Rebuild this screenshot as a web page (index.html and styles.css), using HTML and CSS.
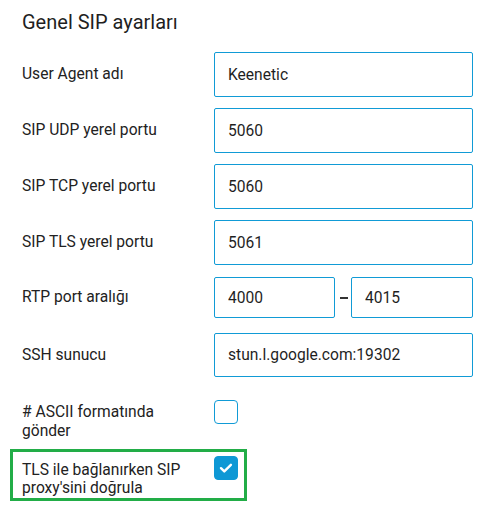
FILE: index.html
```html
<!DOCTYPE html>
<html lang="tr">
<head>
<meta charset="utf-8">
<link rel="stylesheet" href="styles.css">
</head>
<body>
<div class="page">
  <h1 class="title">Genel SIP ayarları</h1>

  <div class="row">
    <div class="label">User Agent adı</div>
    <div class="field"><input class="input" type="text" value="Keenetic"></div>
  </div>
  <div class="row">
    <div class="label">SIP UDP yerel portu</div>
    <div class="field"><input class="input" type="text" value="5060"></div>
  </div>
  <div class="row">
    <div class="label">SIP TCP yerel portu</div>
    <div class="field"><input class="input" type="text" value="5060"></div>
  </div>
  <div class="row">
    <div class="label">SIP TLS yerel portu</div>
    <div class="field"><input class="input" type="text" value="5061"></div>
  </div>
  <div class="row row-rtp">
    <div class="label">RTP port aralığı</div>
    <div class="field range">
      <input class="input input-short" type="text" value="4000">
      <span class="dash"></span>
      <input class="input input-short" type="text" value="4015">
    </div>
  </div>
  <div class="row row-ssh">
    <div class="label">SSH sunucu</div>
    <div class="field"><input class="input input-ssh" type="text" value="stun.l.google.com:19302"></div>
  </div>

  <div class="row row-check">
    <div class="label label-wrap">#&nbsp;ASCII formatında gönder</div>
    <span class="checkbox"></span>
  </div>

  <div class="row row-check highlight">
    <div class="label label-wrap">TLS ile bağlanırken SIP proxy'sini doğrula</div>
    <span class="checkbox checked">
      <svg viewBox="0 0 24 24" width="24" height="24"><path d="M7 12.2l3.3 3.2 6.6-6.6" fill="none" stroke="#fff" stroke-width="2.4" stroke-linecap="round" stroke-linejoin="round"/></svg>
    </span>
  </div>
</div>
</body>
</html>
```

FILE: styles.css
```css
* { box-sizing: border-box; }
html, body {
  margin: 0;
  padding: 0;
  background: #fff;
}
body {
  font-family: Roboto, "Noto Sans", "Liberation Sans", sans-serif;
  color: #222;
}
.page {
  padding: 11px 13px 0 22px;
  width: 486px;
}
.title {
  margin: 0 0 18px;
  font-size: 20px;
  line-height: 23px;
  font-weight: 400;
  color: #1f1f1f;
}
.row {
  display: flex;
  align-items: center;
  margin-bottom: 11px;
}
.label {
  width: 192px;
  flex: none;
  font-size: 15.6px;
  line-height: 19px;
  color: #222;
}
.field {
  width: 259px;
  flex: none;
}
.input {
  display: block;
  width: 259px;
  height: 45px;
  border: 1px solid #119bd6;
  border-radius: 2px;
  padding: 0 13px;
  font-family: inherit;
  font-size: 15.6px;
  color: #1f1f1f;
  background: #fff;
  outline: none;
}
.row-rtp { margin-top: 12px; }
.range {
  display: flex;
  align-items: center;
}
.input-short {
  height: 41px;
  width: 121px;
}
.range .input-short:last-child { width: 122px; }
.dash {
  width: 16px;
  display: flex;
  justify-content: center;
}
.dash::before {
  content: "";
  display: block;
  width: 8px;
  height: 2px;
  background: #333;
  margin-left: 1px;
}
.row-ssh { margin-top: 15px; }
.input-ssh { height: 44px; }
.row-check {
  align-items: flex-start;
  margin-top: 23px;
  margin-bottom: 0;
}
.label-wrap {
  width: 172px;
  margin-right: 20px;
  padding-top: 3px;
}
.checkbox {
  width: 24px;
  height: 24px;
  flex: none;
  border: 1px solid #119bd6;
  border-radius: 4px;
  background: #fff;
  display: block;
}
.checkbox.checked {
  background: #0e98d5;
  border-color: #0e98d5;
}
.checkbox svg {
  display: block;
  margin: -1px;
}
.highlight {
  margin-left: -12px;
  margin-top: 8px;
  width: 237px;
  padding: 4px 6px 0 9px;
  height: 52px;
  border: 3px solid #22ad47;
}
.highlight .label-wrap {
  padding-top: 5px;
  line-height: 18px;
}
```
